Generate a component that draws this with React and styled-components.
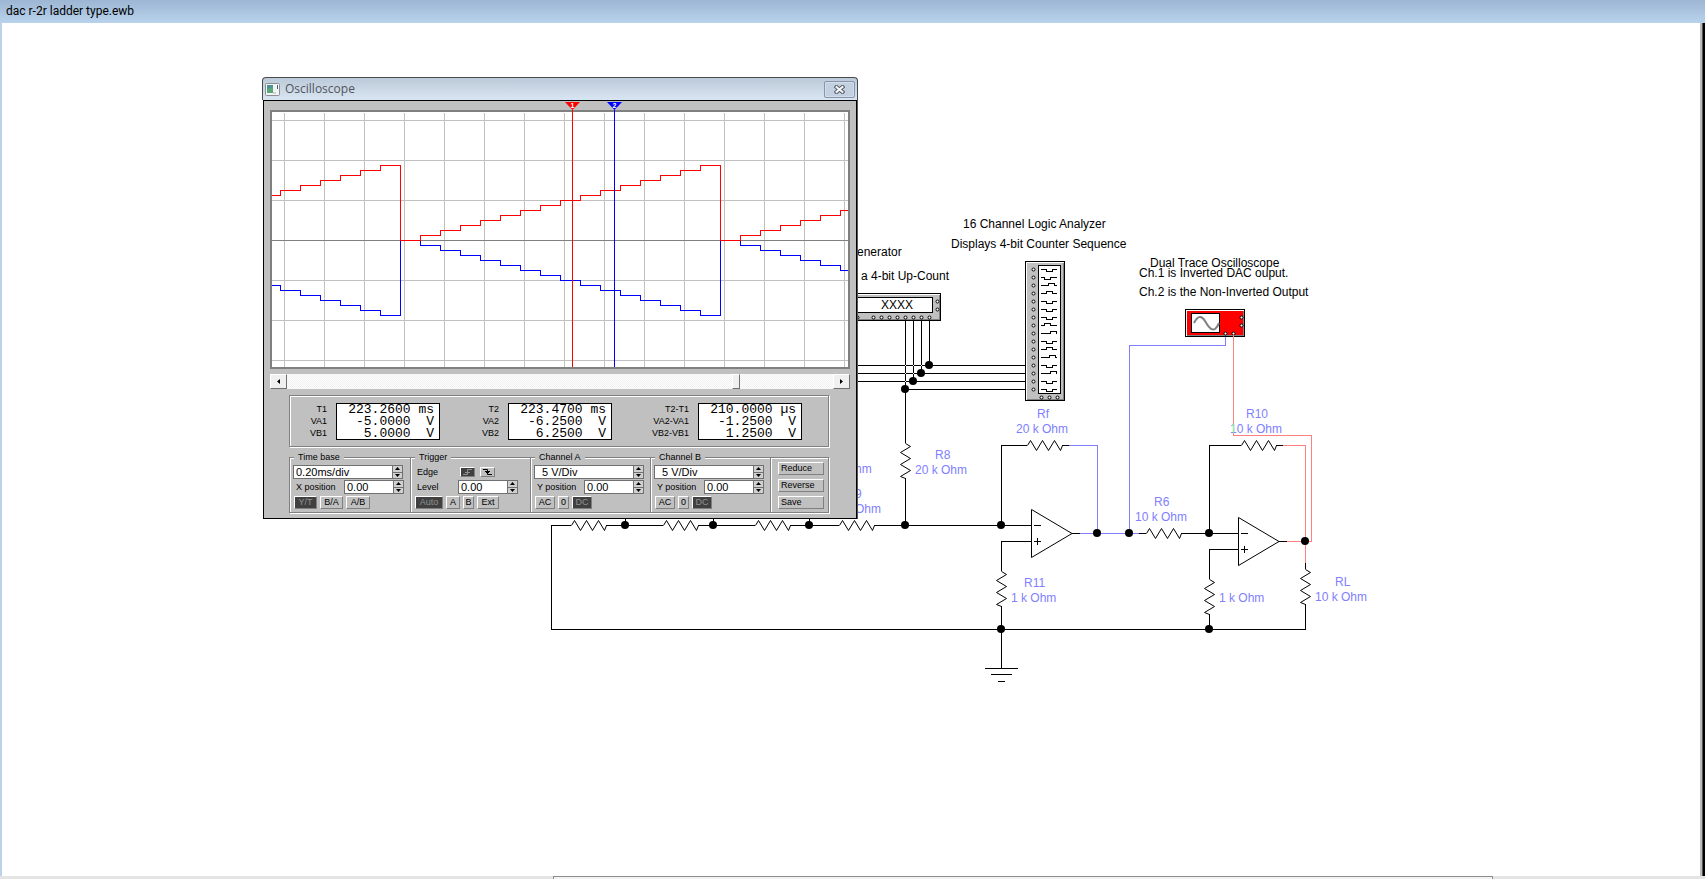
import React from "react";
import styled, { createGlobalStyle, css } from "styled-components";

const GlobalStyle = createGlobalStyle`
  * { box-sizing: border-box; }
  body { margin: 0; background: #fff; }
`;

const UI_FONT = '"Open Sans", "Noto Sans", sans-serif';
const LABEL_FONT = '"Liberation Sans", Arial, sans-serif';
const MONO_FONT = '"Liberation Mono", "Courier New", monospace';

const Page = styled.div`
  display: flex;
  flex-direction: column;
  min-height: 100vh;
  font-family: ${LABEL_FONT};
  color: #000;
`;

const DocumentTitle = styled.header`
  flex: none;
  height: 23px;
  padding-left: 6px;
  background: linear-gradient(#9cb6d3, #b9d2ec);
  font: 12px/23px Roboto, sans-serif;
`;

const Workspace = styled.main`
  position: relative;
  flex: 1;
  overflow: hidden;
  border-left: 2px solid #bcd2eb;
  border-right: 2px solid #000;
  box-shadow: inset -1px 0 0 #555, inset -3px 0 0 #bcbcbc;
`;

const ScrollStrip = styled.footer`
  flex: none;
  display: flex;
  height: 3px;
  background: #e4e4e4;
`;

const StripThumb = styled.div`
  width: calc(55% + 3px);
  margin-left: calc(32% + 7px);
  border: solid #8c8c8c;
  border-width: 1px 1px 0;
  border-radius: 1px 1px 0 0;
  background: #f2f2f2;
`;

const Schematic = styled.svg`
  display: block;
  text {
    font: 12px ${LABEL_FONT};
  }
`;

/* ---------- floating window ---------- */

const Window = styled.section`
  position: absolute;
  left: 260px;
  top: 54px;
  width: 596px;
`;

const WindowTitle = styled.div`
  display: flex;
  align-items: center;
  height: 23px;
  padding: 0 2px;
  border: solid #4a4a4a;
  border-width: 1px 1px 0;
  border-radius: 4px 4px 0 0;
  background: linear-gradient(#bccad9, #d9e5f2);
`;

const WindowName = styled.h1`
  flex: 1;
  margin: 0 0 0 5px;
  font: 12px/20px ${UI_FONT};
  color: #50555c;
`;

const CloseButton = styled.button`
  display: flex;
  align-items: center;
  justify-content: center;
  width: 31px;
  height: 17px;
  padding: 0;
  border: 1px solid #8894ab;
  border-radius: 2px;
  background: #c3d0df;
  box-shadow: inset 0 0 0 1px #d3dfeb;
`;

const WindowBody = styled.div`
  margin: 0 1px;
  padding: 9px 6px 5px;
  border: 1px solid #000;
  background: #c0c0c0;
  box-shadow: 1px 0 0 #555;
  font: 9px/12px ${LABEL_FONT};
`;

const Screen = styled.div`
  border: 2px solid #808080;
  background: #fff;
  svg {
    display: block;
    width: 100%;
    overflow: visible;
  }
`;

const TimeScroll = styled.div`
  display: flex;
  height: 15px;
  margin-top: 5px;
`;

const ScrollButton = styled.button`
  display: flex;
  align-items: center;
  justify-content: center;
  width: 17px;
  padding: 0;
  border: 1px solid;
  border-color: #fff #707070 #707070 #fff;
  background: #f0f0f0;
`;

const ScrollTrack = styled.input`
  flex: 1;
  min-width: 0;
  height: 15px;
  margin: 0;
  appearance: none;
  background: repeating-conic-gradient(#f0f0f0 0 25%, #fff 0 50%) 0 0 / 2px 2px;
  &::-webkit-slider-thumb {
    appearance: none;
    width: 8px;
    height: 15px;
    border: 1px solid;
    border-color: #fff #707070 #707070 #fff;
    background: #f0f0f0;
  }
`;

const etched = css`
  border: 1px solid #808080;
  box-shadow: 1px 1px 0 #fff, inset 1px 1px 0 #fff;
`;

const Readouts = styled.div`
  ${etched}
  display: grid;
  grid-template-columns: 150px 172px 190px;
  align-items: center;
  height: 52px;
  margin: 6px 21px 0 19px;
`;

const Readout = styled.div`
  display: flex;
  justify-content: flex-end;
  align-items: center;
  gap: 9px;
`;

const ReadoutLabels = styled.div`
  text-align: right;
`;

const ReadoutBox = styled.output`
  width: 104px;
  height: 37px;
  padding-right: 5px;
  border: 1px solid #000;
  background: #fff;
  font: 13px/12px ${MONO_FONT};
  text-align: right;
  white-space: pre;
`;

const Controls = styled.div`
  display: grid;
  grid-template-columns: 121px 120px 120px 120px 1fr;
  margin: 4px 21px 0 19px;
`;

const Group = styled.fieldset`
  ${etched}
  display: flex;
  flex-direction: column;
  min-width: 0;
  margin: 0;
  padding: 2px 6px 3px 3px;
  border-right-width: 0;
`;

const GroupTitle = styled.legend`
  height: 12px;
  margin-left: 1px;
  padding: 0 4px;
  background: #c0c0c0;
`;

const Row = styled.div`
  display: flex;
  align-items: center;
  justify-content: space-between;
  height: 14px;
  margin-bottom: 1px;
  padding-right: ${(p) => p.$indent || 0}px;
`;

const RowLabel = styled.label`
  padding-left: 3px;
`;

const SpinField = styled.div`
  display: flex;
  width: ${(p) => (p.$wide ? "110px" : "60px")};
  height: 14px;
  border: 1px solid #707070;
  background: #fff;
`;

const SpinInput = styled.input`
  flex: 1;
  min-width: 0;
  padding: 0 0 0 ${(p) => (p.$inset ? "7px" : "2px")};
  border: 0;
  background: none;
  font: 11px/12px ${LABEL_FONT};
  color: #000;
`;

const SpinButtons = styled.div`
  display: flex;
  flex-direction: column;
  width: 10px;
  border-left: 1px solid #707070;
`;

const SpinButton = styled.button`
  display: flex;
  flex: 1;
  align-items: center;
  justify-content: center;
  padding: 0;
  border: 0;
  background: #d0d0d0;
  & + & {
    border-top: 1px solid #707070;
  }
`;

const ButtonRow = styled.div`
  display: flex;
  gap: 3px;
  margin: 1px 0 0 1px;
`;

const PushButton = styled.button`
  width: ${(p) => p.$w}px;
  height: ${(p) => (p.$short ? "10px" : "13px")};
  padding: 0 ${(p) => (p.$left ? "2px" : "0")};
  border: 1px solid;
  border-color: #fff #808080 #808080 #fff;
  background: ${(p) => (p.$on ? "#404040" : "#c0c0c0")};
  color: ${(p) => (p.$on ? "#909090" : "#000")};
  font: 9px/11px ${LABEL_FONT};
  text-align: ${(p) => (p.$left ? "left" : "center")};
  svg {
    display: block;
    margin: 0 auto;
  }
`;

const EdgeButtons = styled.div`
  display: flex;
  gap: 5px;
`;

const ActionGroup = styled(Group)`
  gap: 4px;
  margin-top: 6px;
  padding: 4px 6px 3px 7px;
  border-right-width: 1px;
`;

/* ---------- schematic parts ---------- */

const BLUE = "#8080ff";
const RED = "#ff8080";

function Wire({ d, color = "#000" }) {
  return <path d={d} fill="none" stroke={color} shapeRendering="crispEdges" />;
}

function Resistor({ x, y, vertical }) {
  return (
    <path
      d="M0 0L3 -5L9 5L15 -5L21 5L27 -5L33 5L35 0"
      transform={`translate(${x + 0.5} ${y + 0.5})${vertical ? " rotate(90)" : ""}`}
      fill="none"
      stroke="#000"
    />
  );
}

function OpAmp({ x, y }) {
  return (
    <g transform={`translate(${x} ${y})`} fill="none" stroke="#000">
      <path d="M0.5 -23.5V24.5L41 0.5Z" />
      <path d="M3 -7.5H10M3 8.5H10M6.5 5V12" shapeRendering="crispEdges" />
    </g>
  );
}

function Pin({ x, y }) {
  return <circle cx={x + 0.5} cy={y + 0.5} r="1.5" fill="#fff" stroke="#000" />;
}

function Instrument({ x, y, w, h, fill = "#c0c0c0", children }) {
  return (
    <g>
      <rect x={x} y={y} width={w} height={h} fill="#000" />
      <rect x={x + 1} y={y + 1} width={w - 2} height={h - 2} fill="#fff" />
      <rect x={x + 2} y={y + 2} width={w - 3} height={h - 3} fill="#808080" />
      <rect x={x + 2} y={y + 2} width={w - 4} height={h - 4} fill={fill} />
      {children}
    </g>
  );
}

function Display({ x, y, w, h }) {
  return <rect x={x + 0.5} y={y + 0.5} width={w - 1} height={h - 1} fill="#fff" stroke="#000" />;
}

const DOTS = [
  [929, 365], [921, 373], [913, 381], [905, 389],
  [625, 525], [713, 525], [809, 525], [905, 525], [1001, 525],
  [1097, 533], [1129, 533], [1209, 533], [1305, 541],
  [1001, 629], [1209, 629],
];

const CROSSINGS = [
  [905, 365], [913, 365], [921, 365], [905, 373], [913, 373], [905, 381],
];

const RESISTORS = [
  [571, 525], [663, 525], [755, 525], [839, 525],
  [1027, 445], [1146, 533], [1241, 445],
  [905, 443, true], [1001, 571, true], [1209, 579, true], [1305, 569, true],
];

const WIRES = [
  "M850 365.5H1025M850 373.5H1025M850 381.5H1025M905 389.5H1025",
  "M905.5 319V443M913.5 319V381M921.5 319V373M929.5 319V365",
  "M905.5 478V525M625.5 515V525M713.5 515V525M809.5 515V525",
  "M571 525.5H551.5V629.5H1305.5V604",
  "M606 525.5H663M698 525.5H755M790 525.5H839M874 525.5H1031",
  "M1001.5 525V445.5H1027M1062 445.5H1069M1072 533.5H1080",
  "M1031 541.5H1001.5V571M1001.5 606V668",
  "M985 668.5H1018M991 674.5H1012M998 681.5H1005",
  "M1139 533.5H1146M1181 533.5H1238M1209.5 533V445.5H1241M1276 445.5H1283",
  "M1238 549.5H1209.5V579M1209.5 614V629M1279 541.5H1287M1305.5 563V569",
];

const NOTES = [
  [963, 228, "16 Channel Logic Analyzer"],
  [951, 248, "Displays 4-bit Counter Sequence"],
  [857, 256, "enerator"],
  [861, 280, "a 4-bit Up-Count"],
  [1150, 267, "Dual Trace Oscilloscope"],
  [1139, 277, "Ch.1 is Inverted DAC ouput."],
  [1139, 296, "Ch.2 is the Non-Inverted Output"],
];

const VALUES = [
  [1037, 418, "Rf"], [1016, 433, "20 k Ohm"],
  [935, 459, "R8"], [915, 474, "20 k Ohm"],
  [855, 473, "hm"], [855, 498, "9"], [855, 513, "Ohm"],
  [1024, 587, "R11"], [1011, 602, "1 k Ohm"],
  [1154, 506, "R6"], [1135, 521, "10 k Ohm"],
  [1246, 418, "R10"], [1230, 433, "10 k Ohm"],
  [1219, 602, "1 k Ohm"],
  [1335, 586, "RL"], [1315, 601, "10 k Ohm"],
];

/* pulse start, pulse direction for each analyzer channel */
const CHANNELS = [
  [5, 2], [3, 2], [7, -2], [5, -2], [5, 2], [5, 2], [5, 2], [3, -2],
  [9, -2], [5, 2], [5, -2], [8, -2], [5, 2], [9, -2], [5, 2], [5, 2],
];

function Circuit() {
  return (
    <Schematic width="1400" height="670" viewBox="2 23 1400 670" role="img" aria-label="R-2R ladder DAC schematic">
      {WIRES.map((d) => <Wire key={d} d={d} />)}
      <Wire color={BLUE} d="M1225.5 337V345.5H1129.5V533M1069 445.5H1097.5V533M1080 533.5H1139" />
      {CROSSINGS.map(([x, y]) => <rect key={`${x}-${y}`} x={x} y={y} width="1" height="1" fill="#fff" />)}
      {RESISTORS.map(([x, y, v]) => <Resistor key={`${x}-${y}`} x={x} y={y} vertical={v} />)}
      <OpAmp x={1031} y={533} />
      <OpAmp x={1238} y={541} />

      <Instrument x={800} y={293} w={141} h={28}>
        <Display x={810} y={297} w={123} h={16} />
        <text x="881" y="309">XXXX</text>
        {[857, 873, 881, 889, 897, 905, 913, 921, 929].map((x) => <Pin key={x} x={x} y={317} />)}
        <Pin x={937} y={301} />
        <Pin x={937} y={309} />
      </Instrument>

      <Instrument x={1025} y={261} w={40} h={140}>
        <Display x={1038} y={265} w={23} h={129} />
        {CHANNELS.map(([start, dy], i) => (
          <g key={i}>
            <Pin x={1033} y={269 + i * 8} />
            <Wire d={`M1041 ${269.5 + i * 8}h${start}v${dy}h6v${-dy}H1057`} />
          </g>
        ))}
        {[1041, 1049, 1057].map((x) => <Pin key={x} x={x} y={397} />)}
      </Instrument>

      <Instrument x={1185} y={309} w={60} h={28} fill="#f00">
        <Display x={1191} y={313} w={29} h={20} />
        <path d="M1194 323C1197 317 1201 314 1205 321S1214 335 1219 323" fill="none" stroke="#808080" strokeWidth="2" />
        <Pin x={1225} y={333} />
        <Pin x={1233} y={333} />
        <Pin x={1241} y={317} />
        <Pin x={1241} y={325} />
      </Instrument>

      {NOTES.map(([x, y, t]) => <text key={t} x={x} y={y}>{t}</text>)}
      {VALUES.map(([x, y, t]) => <text key={`${x}-${y}`} x={x} y={y} fill={BLUE}>{t}</text>)}

      <Wire color={RED} d="M1233.5 335V435.5H1311.5V541.5H1287M1283 445.5H1305.5V563" />
      <Wire color="#80ff80" d="M1233.5 424V433" />
      {DOTS.map(([x, y]) => <circle key={`${x}-${y}`} cx={x} cy={y} r="4" />)}
    </Schematic>
  );
}

/* ---------- oscilloscope plot ---------- */

/* staircase path; sign is -1 for the rising trace and 1 for the falling one */
function staircase(sign) {
  const y = (n) => 240.5 + sign * 5 * n;
  let d = `M272 ${y(9)}`;
  for (let n = 10; n <= 15; n += 1) d += `H${280.5 + (n - 10) * 20}V${y(n)}`;
  for (const base of [400.5, 720.5]) {
    d += `H${base}V${y(0)}`;
    for (let n = 1; n <= 15; n += 1) {
      const x = base + n * 20;
      if (x < 848) d += `H${x}V${y(n)}`;
    }
  }
  return `${d}H848`;
}

const GRID_X = Array.from({ length: 15 }, (_, i) => 284 + i * 40);
const GRID_Y = [120, 160, 200, 280, 320, 360];

function Cursor({ x, color, name }) {
  return (
    <g>
      <path d={`M${x + 0.5} 110V367`} stroke={color} shapeRendering="crispEdges" />
      <path d={`M${x - 7} 102H${x + 8}L${x + 0.5} 110Z`} fill={color} />
      <text x={x + 0.5} y="108" fill="#fff" textAnchor="middle" fontSize="7" fontWeight="bold">{name}</text>
    </g>
  );
}

function Plot() {
  return (
    <svg viewBox="272 112 576 255" role="img" aria-label="Oscilloscope traces">
      <g shapeRendering="crispEdges" fill="none">
        {GRID_X.map((x) => <path key={x} d={`M${x + 0.5} 113V367`} stroke="#c0c0c0" />)}
        {GRID_Y.map((y) => <path key={y} d={`M272 ${y + 0.5}H848`} stroke="#c0c0c0" />)}
        <path d="M272 240.5H848" stroke="#808080" />
        <path d={staircase(1)} stroke="#00f" />
        <path d={staircase(-1)} stroke="#f00" />
      </g>
      <Cursor x={572} color="#f00" name="1" />
      <Cursor x={614} color="#00f" name="2" />
    </svg>
  );
}

function Triangle({ d, w, h }) {
  return <svg width={w} height={h} viewBox={`0 0 ${w} ${h}`} aria-hidden="true"><path d={d} /></svg>;
}

function Spin({ id, label, value, wide, inset }) {
  return (
    <SpinField $wide={wide}>
      <SpinInput id={id} aria-label={label} defaultValue={value} $inset={inset} />
      <SpinButtons>
        <SpinButton type="button" aria-label={`Increase ${label}`}><Triangle w={5} h={3} d="M0 3L2.5 0L5 3Z" /></SpinButton>
        <SpinButton type="button" aria-label={`Decrease ${label}`}><Triangle w={5} h={3} d="M0 0L2.5 3L5 0Z" /></SpinButton>
      </SpinButtons>
    </SpinField>
  );
}

const READOUTS = [
  { labels: ["T1", "VA1", "VB1"], text: "223.2600 ms\n-5.0000  V\n5.0000  V" },
  { labels: ["T2", "VA2", "VB2"], text: "223.4700 ms\n-6.2500  V\n6.2500  V" },
  { labels: ["T2-T1", "VA2-VA1", "VB2-VB1"], text: "210.0000 µs\n-1.2500  V\n1.2500  V" },
];

function ChannelGroup({ name }) {
  const id = `y-position-${name}`;
  return (
    <Group>
      <GroupTitle>Channel {name}</GroupTitle>
      <Row><Spin wide inset label={`channel ${name} scale`} value="5 V/Div" /></Row>
      <Row>
        <RowLabel htmlFor={id}>Y position</RowLabel>
        <Spin id={id} label={`channel ${name} Y position`} value="0.00" />
      </Row>
      <ButtonRow>
        <PushButton type="button" $w={20}>AC</PushButton>
        <PushButton type="button" $w={11}>0</PushButton>
        <PushButton type="button" $w={20} $on aria-pressed="true">DC</PushButton>
      </ButtonRow>
    </Group>
  );
}

function Oscilloscope() {
  return (
    <Window aria-label="Oscilloscope">
      <WindowTitle>
        <svg width="15" height="13" viewBox="0 0 15 13" aria-hidden="true">
          <rect x="0.5" y="0.5" width="14" height="12" rx="1" fill="#f4f4f4" stroke="#8a8f94" />
          <rect x="2" y="2" width="6" height="8" fill="#4f8f9a" />
          <path d="M2 10V6L8 4V10Z" fill="#5aa878" />
          <rect x="12" y="2" width="1" height="4" fill="#46608a" />
          <rect x="8" y="9" width="3" height="2" fill="#d0d0d0" />
        </svg>
        <WindowName>Oscilloscope</WindowName>
        <CloseButton type="button" aria-label="Close">
          <svg width="11" height="9" viewBox="0 0 11 9" aria-hidden="true">
            <path d="M2.5 2L8.5 7M8.5 2L2.5 7" stroke="#505868" strokeWidth="4" strokeLinecap="square" />
            <path d="M2.5 2L8.5 7M8.5 2L2.5 7" stroke="#f4f4f4" strokeWidth="2" strokeLinecap="square" />
          </svg>
        </CloseButton>
      </WindowTitle>
      <WindowBody>
        <Screen><Plot /></Screen>
        <TimeScroll>
          <ScrollButton type="button" aria-label="Scroll left"><Triangle w={3} h={5} d="M3 0L0 2.5L3 5Z" /></ScrollButton>
          <ScrollTrack type="range" min="0" max="538" defaultValue="445" aria-label="Time position" />
          <ScrollButton type="button" aria-label="Scroll right"><Triangle w={3} h={5} d="M0 0L3 2.5L0 5Z" /></ScrollButton>
        </TimeScroll>
        <Readouts>
          {READOUTS.map(({ labels, text }) => (
            <Readout key={labels[0]}>
              <ReadoutLabels>{labels.map((l) => <div key={l}>{l}</div>)}</ReadoutLabels>
              <ReadoutBox>{text}</ReadoutBox>
            </Readout>
          ))}
        </Readouts>
        <Controls>
          <Group>
            <GroupTitle>Time base</GroupTitle>
            <Row><Spin wide label="time base" value="0.20ms/div" /></Row>
            <Row>
              <RowLabel htmlFor="x-position">X position</RowLabel>
              <Spin id="x-position" label="X position" value="0.00" />
            </Row>
            <ButtonRow>
              <PushButton type="button" $w={23} $on aria-pressed="true">Y/T</PushButton>
              <PushButton type="button" $w={23}>B/A</PushButton>
              <PushButton type="button" $w={24}>A/B</PushButton>
            </ButtonRow>
          </Group>
          <Group>
            <GroupTitle>Trigger</GroupTitle>
            <Row $indent={29}>
              <RowLabel as="span">Edge</RowLabel>
              <EdgeButtons>
                <PushButton type="button" $w={15} $short $on aria-label="Rising edge" aria-pressed="true">
                  <svg width="11" height="8" viewBox="0 0 11 8"><path d="M1 6.5H5.5V1.5H10M3 4.5H8" fill="none" stroke="#909090" /></svg>
                </PushButton>
                <PushButton type="button" $w={15} $short aria-label="Falling edge">
                  <svg width="11" height="8" viewBox="0 0 11 8"><path d="M1 1.5H5.5V6.5H10M3 3.5H8M4 4.5H7" fill="none" stroke="#000" /></svg>
                </PushButton>
              </EdgeButtons>
            </Row>
            <Row $indent={6}>
              <RowLabel htmlFor="level">Level</RowLabel>
              <Spin id="level" label="trigger level" value="0.00" />
            </Row>
            <ButtonRow>
              <PushButton type="button" $w={28} $on aria-pressed="true">Auto</PushButton>
              <PushButton type="button" $w={14}>A</PushButton>
              <PushButton type="button" $w={11}>B</PushButton>
              <PushButton type="button" $w={22}>Ext</PushButton>
            </ButtonRow>
          </Group>
          <ChannelGroup name="A" />
          <ChannelGroup name="B" />
          <ActionGroup aria-label="Actions">
            <PushButton type="button" $w={46} $left>Reduce</PushButton>
            <PushButton type="button" $w={46} $left>Reverse</PushButton>
            <PushButton type="button" $w={46} $left>Save</PushButton>
          </ActionGroup>
        </Controls>
      </WindowBody>
    </Window>
  );
}

export default function App() {
  return (
    <Page>
      <GlobalStyle />
      <DocumentTitle>dac r-2r ladder type.ewb</DocumentTitle>
      <Workspace>
        <Circuit />
        <Oscilloscope />
      </Workspace>
      <ScrollStrip><StripThumb /></ScrollStrip>
    </Page>
  );
}
